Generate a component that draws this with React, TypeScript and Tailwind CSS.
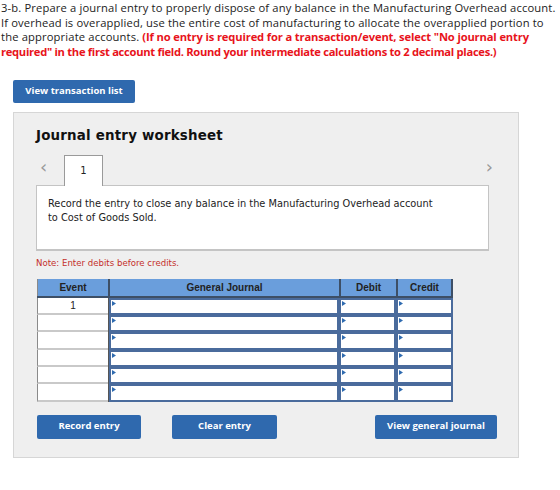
import React from "react";

const rows = ["1", "", "", "", "", ""];

function Marker() {
  return (
    <svg className="absolute left-[1px] top-[1px]" width="4" height="5" viewBox="0 0 4 5">
      <path d="M0 0 L4 2.5 L0 5 Z" fill="#2f6bb0" />
    </svg>
  );
}

function InputCell({ w }: { w: string }) {
  return (
    <div className={`${w} h-full border-2 border-[#4a6b9c] bg-white relative`}>
      <Marker />
    </div>
  );
}

export default function App() {
  return (
    <div className="w-[560px] h-[490px] bg-white text-[#333] font-['Open_Sans',sans-serif]">
      <div className="pl-[1px] pt-[1px] text-[11.2px] leading-[14.7px] text-[#222] whitespace-nowrap tracking-[0.15px]">
        <div>3-b. Prepare a journal entry to properly dispose of any balance in the Manufacturing Overhead account.</div>
        <div>If overhead is overapplied, use the entire cost of manufacturing to allocate the overapplied portion to</div>
        <div>
          the appropriate accounts.{" "}
          <span className="font-bold text-[#e8131b] tracking-[-0.15px]">(If no entry is required for a transaction/event, select "No journal entry</span>
        </div>
        <div className="font-bold text-[#e8131b] tracking-[-0.3px]">
          required" in the first account field. Round your intermediate calculations to 2 decimal places.)
        </div>
      </div>

      <button className="ml-[13px] mt-[20px] w-[122px] h-[23px] rounded-[2px] bg-[#2f69ae] text-white text-[9.5px] font-bold">
        View transaction list
      </button>

      <div className="ml-[13px] mt-[9px] w-[506px] h-[346px] bg-[#efefef] border border-[#d6d6d6] pl-[22px] pr-[29px]">
        <h2 className="mt-[14px] h-[18px] text-[13.4px] leading-[18px] font-bold text-[#111] font-['DejaVu_Sans',sans-serif] tracking-[0.2px]">
          Journal entry worksheet
        </h2>

        <div className="mt-[9px] flex items-end h-[31px]">
          <span className="w-[28px] pl-[4px] pb-[9px] text-[18px] leading-[18px] text-[#999] font-['DejaVu_Sans',sans-serif]">‹</span>
          <div className="w-[39px] h-[31px] bg-white border border-b-0 border-[#9a9a9a] flex items-center justify-center text-[10px] text-[#222] font-['DejaVu_Sans',sans-serif] -mb-[1px] relative z-10">
            1
          </div>
          <span className="ml-auto mr-[-4px] pb-[9px] text-[18px] leading-[18px] text-[#999] font-['DejaVu_Sans',sans-serif]">›</span>
        </div>

        <div className="h-[66px] bg-white border border-[#c4c4c4] border-b-2 px-[11px] pt-[11px] text-[9.8px] leading-[14.5px] text-[#222] font-['DejaVu_Sans',sans-serif]">
          Record the entry to close any balance in the Manufacturing Overhead account
          <br />
          to Cost of Goods Sold.
        </div>

        <p className="mt-[6px] text-[8.6px] leading-[12px] text-[#c4302b] font-['DejaVu_Sans',sans-serif]">
          Note: Enter debits before credits.
        </p>

        <div className="mt-[10px] ml-[1px] w-[416px] font-['Liberation_Sans',sans-serif]">
          <div className="flex h-[19px] bg-[#6a9edc] border-b-2 border-[#3d4f66] text-[10px] font-bold text-[#222]">
            <div className="w-[71px] border-l border-[#8a8a8a] flex items-center justify-center">Event</div>
            <div className="w-[231px] border-l-2 border-[#3d4f66] flex items-center justify-center">General Journal</div>
            <div className="w-[57px] border-l-2 border-[#3d4f66] flex items-center justify-center">Debit</div>
            <div className="w-[57px] border-l-2 border-r-2 border-[#3d4f66] flex items-center justify-center">Credit</div>
          </div>
          {rows.map((r, i) => (
            <div key={i} className="flex h-[17.3px]">
              <div className="w-[71px] h-full bg-white border-l border-[#8a8a8a] border-b-2 border-b-[#c9c9c9] flex items-center justify-center text-[10px] text-[#222]">
                {r}
              </div>
              <div className="w-[1px] bg-[#555]" />
              <InputCell w="w-[231px]" />
              <InputCell w="w-[57px]" />
              <InputCell w="w-[57px]" />
            </div>
          ))}
        </div>

        <div className="mt-[13px] flex text-[9.5px] font-bold text-white">
          <button className="ml-[1px] w-[104px] h-[24px] rounded-[2px] bg-[#2f69ae]">Record entry</button>
          <button className="ml-[31px] w-[105px] h-[24px] rounded-[2px] bg-[#2f69ae]">Clear entry</button>
          <button className="ml-auto mr-[-8px] w-[122px] h-[24px] rounded-[2px] bg-[#2f69ae]">View general journal</button>
        </div>
      </div>
    </div>
  );
}
